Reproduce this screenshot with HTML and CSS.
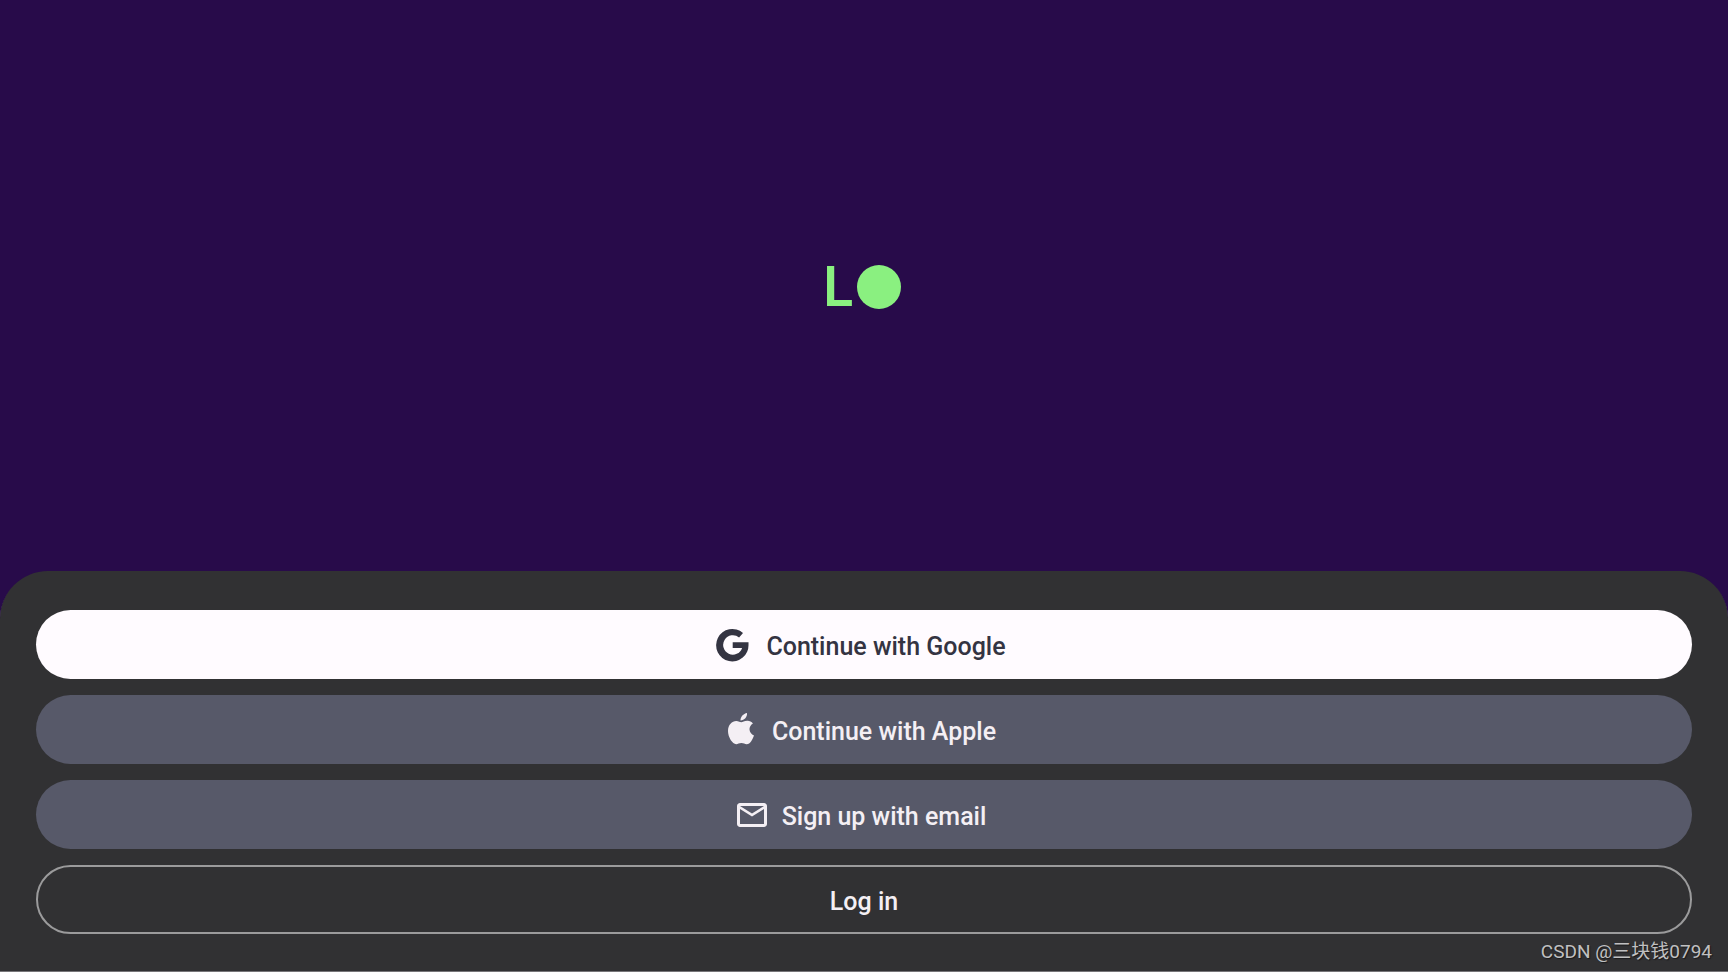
FILE: index.html
```html
<!DOCTYPE html>
<html lang="en">
<head>
    <meta charset="UTF-8">
    <meta name="viewport" content="width=device-width, initial-scale=1.0">
    <title>Welcome</title>
    <link rel="stylesheet" href="styles.css">
</head>
<body>

    <main class="hero">
        <div class="logo">
            <span>L</span>
            <div class="ball"></div>
        </div>
    </main>

    <div class="sheet">
        <button type="button" class="btn google">
            <svg viewBox="0 0 40 40" width="40" height="40">
                <path d="M29 8A16.2 16.2 0 1 0 34.500 19.500V17.300H18.700V22.900H28.100A9.700 9.700 0 1 1 25.100 12.500Z"/>
            </svg>
            <span>Continue with Google</span>
        </button>
        <button type="button" class="btn">
            <svg viewBox="0 0 36 36" width="36" height="36">
                <path d="M23 1C23.400 4.800 20.200 8.600 16.500 8.500C16.200 4.900 19.500 1.500 23 1Z"/>
                <path d="M17.200 10.200C18.500 10.200 20.700 8.600 23.600 8.800C25.600 8.900 27.600 9.700 28.900 11.500C23.800 14.700 24.700 21.300 30 23.400C28.800 26.700 26.200 32.200 22.700 32.200C20.700 32.200 19.700 31 17.400 31C15 31 14 32.200 12.200 32.200C8.500 32.200 4 25.300 4 19.100C4 12.500 8.100 8.900 12.200 8.900C14.600 8.900 16.200 10.200 17.200 10.200Z"/>
            </svg>
            <span>Continue with Apple</span>
        </button>
        <button type="button" class="btn">
            <svg viewBox="0 0 24 24" width="36" height="36">
                <path d="M22 6c0-1.100-.9-2-2-2H4c-1.100 0-2 .9-2 2v12c0 1.100.9 2 2 2h16c1.100 0 2-.9 2-2V6zm-2 0l-8 5-8-5h16zm0 12H4V8l8 5 8-5v10z"/>
            </svg>
            <span>Sign up with email</span>
        </button>
        <button type="button" class="btn outline"><span>Log in</span></button>
        <div class="watermark">CSDN @三块钱0794</div>
    </div>

</body>
</html>
```

FILE: styles.css
```css
* {
    box-sizing: border-box;
}
body {
    display: flex;
    flex-direction: column;
    min-height: 100vh;
    margin: 0;
    background-color: #280b4a;
    font-family: Roboto, "Liberation Sans", sans-serif;
}

.hero {
    display: flex;
    flex: 1;
    align-items: center;
    justify-content: center;
    padding-top: 2px;
}
.logo {
    display: flex;
    align-items: center;
    gap: 3px;
    padding-right: 4px;
    color: #8af080;
    font-family: Inter, sans-serif;
    font-size: 55px;
    font-weight: 600;
    line-height: 1;
}
.ball {
    width: 44px;
    height: 44px;
    border-radius: 50%;
    background-color: #8af080;
}

.sheet {
    position: relative;
    display: flex;
    flex-direction: column;
    gap: 16px;
    padding: 39px 36px 38px;
    background-color: #313133;
    border-radius: 48px 48px 0 0;
    box-shadow: inset 0 -1px #777679;
}
.btn {
    display: flex;
    align-items: center;
    justify-content: center;
    gap: 12px;
    height: 69px;
    padding: 0 32px 0 24px;
    border: none;
    border-radius: 35px;
    background-color: #575969;
    color: #f4eff4;
    font-family: inherit;
    font-size: 25px;
    font-weight: 500;
    cursor: pointer;
}
.btn span {
    padding-top: 3px;
}
.btn svg {
    fill: currentColor;
}
.google {
    background-color: #fffbff;
    color: #343442;
}
.outline {
    padding: 0 24px;
    border: 2px solid #9b9b9c;
    background-color: transparent;
}

.watermark {
    position: absolute;
    right: 16px;
    bottom: 8px;
    color: #c0c0c1;
    font-family: Roboto, "Noto Sans CJK SC", sans-serif;
    font-size: 19px;
    line-height: 24px;
    text-shadow: 1px 1px 1px #19191a;
}
```
